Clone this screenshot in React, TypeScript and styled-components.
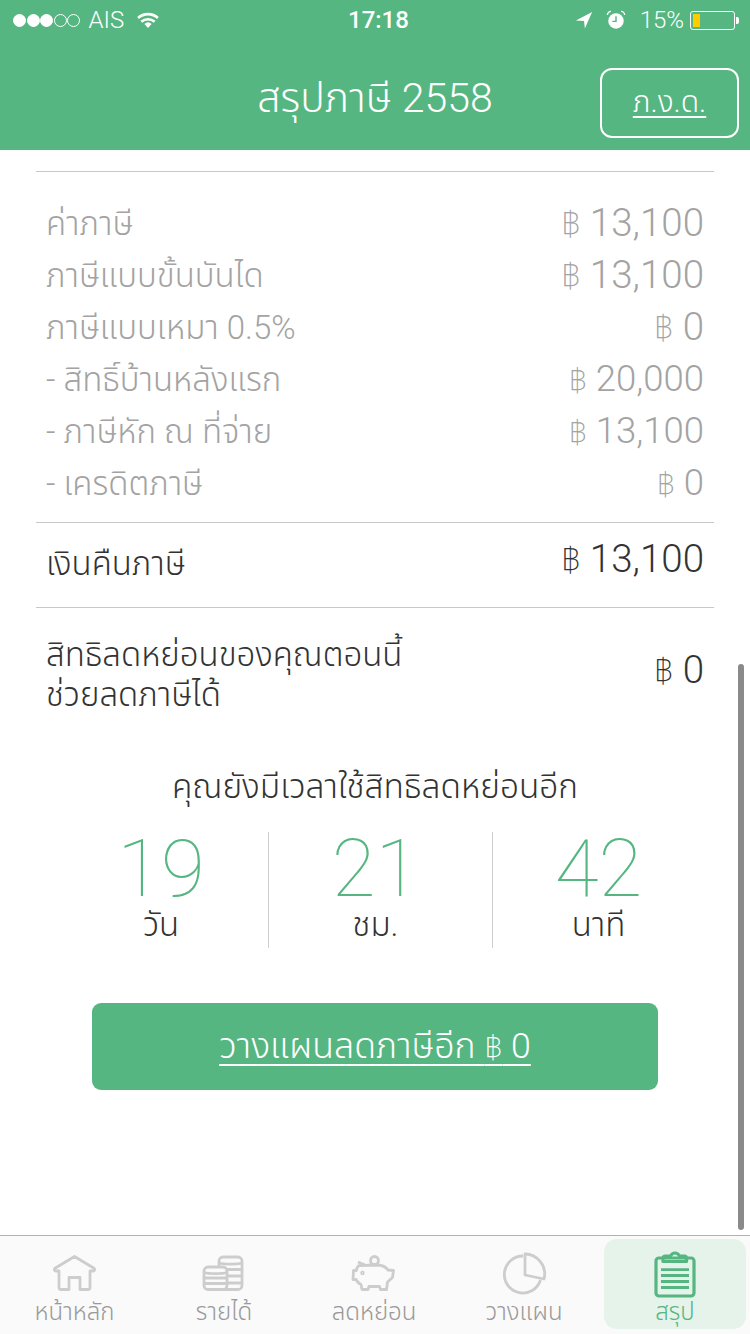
import React from "react";
import styled, { createGlobalStyle } from "styled-components";

const GREEN = "#56b681";
const FONT = `Roboto, "Noto Sans Thai", "Noto Sans", sans-serif`;

const GlobalStyle = createGlobalStyle`
  html, body {
    margin: 0;
    padding: 0;
    background: #fff;
  }
  body {
    font-family: ${FONT};
  }
`;

const Screen = styled.div`
  position: relative;
  width: 750px;
  height: 1334px;
  display: flex;
  flex-direction: column;
  overflow: hidden;
  background: #fff;
`;

const TopArea = styled.div`
  height: 150px;
  flex: none;
  background: ${GREEN};
  color: #fff;
`;

const StatusBar = styled.div`
  height: 40px;
  display: grid;
  grid-template-columns: 335px auto 1fr;
  align-items: center;
  padding: 0 11px 0 13px;
`;

const StatusSide = styled.div<{ $end?: boolean }>`
  display: flex;
  align-items: center;
  justify-content: ${(p) => (p.$end ? "flex-end" : "flex-start")};
`;

const StatusText = styled.span<{ $bold?: boolean }>`
  font-size: 24px;
  font-weight: ${(p) => (p.$bold ? 500 : 300)};
`;

const Carrier = styled(StatusText)`
  margin-left: 8px;
`;

const Dot = styled.span<{ $on: boolean }>`
  width: 13px;
  height: 13px;
  box-sizing: border-box;
  margin-right: 0.5px;
  border-radius: 50%;
  border: 1px solid #fff;
  background: ${(p) => (p.$on ? "#fff" : "transparent")};
`;

const Battery = styled.span`
  width: 45px;
  height: 19px;
  margin: 0 4px 0 6px;
  box-sizing: border-box;
  border: 1px solid #fff;
  border-radius: 3px;
  padding: 2px;
  display: flex;
  position: relative;
  &::after {
    content: "";
    position: absolute;
    right: -5px;
    top: 5px;
    width: 3px;
    height: 7px;
    background: #fff;
    border-radius: 0 2px 2px 0;
  }
`;

const BatteryLevel = styled.span`
  width: 7px;
  background: #ffcc00;
`;

const NavBar = styled.div`
  height: 110px;
  position: relative;
  display: flex;
  align-items: center;
  justify-content: center;
`;

const NavTitle = styled.div`
  font-size: 41px;
  font-weight: 300;
  margin-top: 7px;
`;

const TaxFormButton = styled.button`
  position: absolute;
  right: 11px;
  top: 28px;
  width: 139px;
  height: 70px;
  background: transparent;
  color: #fff;
  border: 2px solid #fff;
  border-radius: 12px;
  font-family: ${FONT};
  font-size: 30px;
  font-weight: 300;
  padding: 0;
  text-decoration: underline;
  text-decoration-thickness: 2px;
  text-underline-offset: 4px;
`;

const Content = styled.div`
  flex: 1;
  padding: 21px 36px 0;
`;

const Rule = styled.div`
  height: 1px;
  background: #c8c8c8;
`;

const TaxList = styled.div`
  padding: 27px 10px 11px;
`;

const TaxRow = styled.div`
  height: 52px;
  display: flex;
  align-items: center;
  justify-content: space-between;
  color: #a3a3a3;
  font-size: 33px;
  font-weight: 300;
`;

const Amount = styled.span<{ $size?: number; $dark?: boolean; $lift?: boolean }>`
  font-size: ${(p) => p.$size ?? 38.5}px;
  font-weight: 300;
  color: ${(p) => (p.$dark ? "#333" : "#a3a3a3")};
  margin-bottom: ${(p) => (p.$lift ? 8 : 0)}px;
`;

const Baht = styled.span`
  font-size: 0.88em;
  font-weight: 200;
`;

const RefundRow = styled.div`
  height: 84px;
  padding: 0 10px;
  display: flex;
  align-items: center;
  justify-content: space-between;
  color: #333;
  font-size: 33px;
  font-weight: 300;
`;

const RightsRow = styled.div`
  padding: 27px 10px 0;
  display: flex;
  align-items: center;
  justify-content: space-between;
  color: #333;
  font-size: 33px;
  font-weight: 300;
  line-height: 40px;
`;

const CountdownTitle = styled.div`
  margin-top: 50px;
  text-align: center;
  color: #333;
  font-size: 33.4px;
  font-weight: 300;
  line-height: 44px;
`;

const Countdown = styled.div`
  margin: 23px 0 0 18px;
  width: 650px;
  display: grid;
  grid-template-columns: 215px 224px 1fr;
`;

const CountCell = styled.div<{ $divider?: boolean; $inset?: number }>`
  height: 116px;
  box-sizing: border-box;
  border-right: ${(p) => (p.$divider ? "1px solid #cfcfcf" : "none")};
  padding-right: ${(p) => p.$inset ?? 0}px;
  display: flex;
  flex-direction: column;
  align-items: center;
`;

const CountValue = styled.div`
  color: ${GREEN};
  font-size: 80px;
  font-weight: 100;
  line-height: 74px;
`;

const CountUnit = styled.div`
  margin-top: -1px;
  color: #333;
  font-size: 33px;
  font-weight: 300;
  line-height: 40px;
`;

const PlanButton = styled.button`
  display: block;
  width: 566px;
  height: 87px;
  margin: 55px 0 0 56px;
  border: none;
  border-radius: 9px;
  background: ${GREEN};
  color: #fff;
  font-family: ${FONT};
  font-size: 35.7px;
  font-weight: 300;
  text-decoration: underline;
  text-decoration-thickness: 2px;
  text-underline-offset: 6px;
`;

const ScrollThumb = styled.div`
  position: absolute;
  right: 6px;
  top: 664px;
  width: 6px;
  height: 566px;
  border-radius: 3px;
  background: #8a8a8a;
`;

const TabBar = styled.nav`
  height: 99px;
  flex: none;
  box-sizing: border-box;
  border-top: 1px solid #b2b2b2;
  background: #fafafa;
  display: grid;
  grid-template-columns: 149px 150px 150px 150px 1fr;
  padding: 3px 4px 5px 0;
`;

const Tab = styled.div<{ $active?: boolean }>`
  display: flex;
  flex-direction: column;
  align-items: center;
  border-radius: 13px;
  padding-top: 9px;
  margin-left: ${(p) => (p.$active ? 5 : 0)}px;
  background: ${(p) => (p.$active ? "#e5f3ea" : "transparent")};
  color: ${(p) => (p.$active ? GREEN : "#999")};
  font-size: 24px;
  font-weight: 300;
  line-height: 28px;
`;

const TabIconSvg = styled.svg.attrs({ width: 60, height: 50, viewBox: "0 0 60 50", fill: "none" })<{ $active?: boolean }>`
  flex: none;
  display: block;
  stroke: ${(p) => (p.$active ? GREEN : "#cdcdcd")};
  stroke-linejoin: round;
  stroke-width: ${(p) => (p.$active ? 3.2 : 2.8)};
`;

const HomeIcon = () => (
  <TabIconSvg>
    <path d="M24 41.500H16a2 2 0 0 1-2-2V23h-3a1.500 1.500 0 0 1-1-2.700L29.500 8.500 49 20.300a1.500 1.500 0 0 1-1 2.700h-3v16.500a2 2 0 0 1-2 2h-8V29.500H24z" />
  </TabIconSvg>
);

const CoinsIcon = () => (
  <TabIconSvg>
    <rect x="25" y="9" width="23" height="32.500" rx="4" />
    <path d="M25 15c5 1.500 18 1.500 23 0M33 21.500h15M33 28h15M33 35h15" />
    <rect x="10" y="19" width="23" height="22.500" rx="4" fill="#fafafa" />
    <path d="M10 24.500c5 1.500 18 1.500 23 0M10 30h23M10 35.500h23" />
  </TabIconSvg>
);

const PiggyIcon = () => (
  <TabIconSvg>
    <circle cx="30.500" cy="12.500" r="4" />
    <path d="M14 14l8 3.500c2-.5 3.500-.5 5-.5M34.500 17c4 .5 7.500 2 9.500 5l5.500.5-1 7-5 4.500-1 7.500h-6l-1-3H25l-1 3h-6l-1-5c-2.500-1-4-3-5-5h-3l.5-9h3c0-3 2-5 3-5z" />
    <circle cx="18.500" cy="25" r="0.800" />
  </TabIconSvg>
);

const PieIcon = () => (
  <TabIconSvg>
    <path d="M29 8A18.500 18.500 0 1 0 46.500 32" />
    <path d="M31 6V27L50 31A20 20 0 0 0 31 6z" />
  </TabIconSvg>
);

const ClipboardIcon = () => (
  <TabIconSvg $active>
    <rect x="11" y="10" width="38" height="38" rx="3" />
    <path d="M18 10V13.500H41.500V10c0-1-.5-2-2-2h-5c-1-2-3-3-4.500-3s-3.500 1-4.500 3h-5.500c-1 0-2 1-2 2z" />
    <path strokeWidth="2.800" d="M16 21.700h28M16 27.500h28M16 33.500h28M16 39.500h28" />
  </TabIconSvg>
);

const StatusIcon = styled.svg<{ $gap: number; $lead?: number }>`
  flex: none;
  margin: 0 ${(p) => p.$gap}px 0 ${(p) => p.$lead ?? 0}px;
`;

const WifiIcon = () => (
  <StatusIcon $gap={0} $lead={12} width="24" height="18" viewBox="0 0 26 20" fill="#fff">
    <path d="M13 19l-4-4.600a6 6 0 0 1 8 0z" />
    <path d="M1 6.600l1.900 2.200a15 15 0 0 1 20.200 0L25 6.600a18 18 0 0 0-24 0z" />
    <path d="M4.700 10.800l1.900 2.200a9.500 9.500 0 0 1 12.800 0l1.900-2.200a12.500 12.500 0 0 0-16.600 0z" />
  </StatusIcon>
);

const LocationIcon = () => (
  <StatusIcon $gap={13} width="18" height="18" viewBox="0 0 20 20" fill="#fff">
    <path d="M19 1L1 10.500l9 .5 1 8.500z" />
  </StatusIcon>
);

const AlarmIcon = () => (
  <StatusIcon $gap={14} width="20" height="20" viewBox="0 0 22 22">
    <circle cx="11" cy="12" r="8.500" fill="#fff" />
    <path d="M11 7v5.500H7" fill="none" stroke={GREEN} strokeWidth="1.600" />
    <path d="M1.500 5.500a4 4 0 0 1 4-4M20.500 5.500a4 4 0 0 0-4-4" fill="none" stroke="#fff" strokeWidth="1.500" />
  </StatusIcon>
);

const taxRows = [
  { label: "ค่าภาษี", amount: "13,100", size: 38.5 },
  { label: "ภาษีแบบขั้นบันได", amount: "13,100", size: 38.5 },
  { label: "ภาษีแบบเหมา 0.5%", amount: "0", size: 38.5 },
  { label: "- สิทธิ์บ้านหลังแรก", amount: "20,000", size: 36.5 },
  { label: "- ภาษีหัก ณ ที่จ่าย", amount: "13,100", size: 36.5 },
  { label: "- เครดิตภาษี", amount: "0", size: 36.5 },
];

const countdown = [
  { value: "19", unit: "วัน", inset: 0 },
  { value: "21", unit: "ชม.", inset: 10 },
  { value: "42", unit: "นาที", inset: 0 },
];

const tabs = [
  { label: "หน้าหลัก", icon: <HomeIcon /> },
  { label: "รายได้", icon: <CoinsIcon /> },
  { label: "ลดหย่อน", icon: <PiggyIcon /> },
  { label: "วางแผน", icon: <PieIcon /> },
  { label: "สรุป", icon: <ClipboardIcon />, active: true },
];

const App = () => {
  return (
    <Screen>
      <GlobalStyle />
      <TopArea>
        <StatusBar>
          <StatusSide>
            {[true, true, true, false, false].map((on, i) => (
              <Dot key={i} $on={on} />
            ))}
            <Carrier>AIS</Carrier>
            <WifiIcon />
          </StatusSide>
          <StatusText $bold>17:18</StatusText>
          <StatusSide $end>
            <LocationIcon />
            <AlarmIcon />
            <StatusText>15%</StatusText>
            <Battery>
              <BatteryLevel />
            </Battery>
          </StatusSide>
        </StatusBar>
        <NavBar>
          <NavTitle>สรุปภาษี 2558</NavTitle>
          <TaxFormButton>ภ.ง.ด.</TaxFormButton>
        </NavBar>
      </TopArea>
      <Content>
        <Rule />
        <TaxList>
          {taxRows.map((row) => (
            <TaxRow key={row.label}>
              <span>{row.label}</span>
              <Amount $size={row.size}>
                <Baht>฿</Baht> {row.amount}
              </Amount>
            </TaxRow>
          ))}
        </TaxList>
        <Rule />
        <RefundRow>
          <span>เงินคืนภาษี</span>
          <Amount $dark $lift>
            <Baht>฿</Baht> 13,100
          </Amount>
        </RefundRow>
        <Rule />
        <RightsRow>
          <span>
            สิทธิลดหย่อนของคุณตอนนี้
            <br />
            ช่วยลดภาษีได้
          </span>
          <Amount $dark $lift>
            <Baht>฿</Baht> 0
          </Amount>
        </RightsRow>
        <CountdownTitle>คุณยังมีเวลาใช้สิทธิลดหย่อนอีก</CountdownTitle>
        <Countdown>
          {countdown.map((item, i) => (
            <CountCell key={item.unit} $divider={i < 2} $inset={item.inset}>
              <CountValue>{item.value}</CountValue>
              <CountUnit>{item.unit}</CountUnit>
            </CountCell>
          ))}
        </Countdown>
        <PlanButton>
          วางแผนลดภาษีอีก <Baht>฿</Baht> 0
        </PlanButton>
      </Content>
      <ScrollThumb />
      <TabBar>
        {tabs.map((tab) => (
          <Tab key={tab.label} $active={tab.active}>
            {tab.icon}
            {tab.label}
          </Tab>
        ))}
      </TabBar>
    </Screen>
  );
};

export default App;
